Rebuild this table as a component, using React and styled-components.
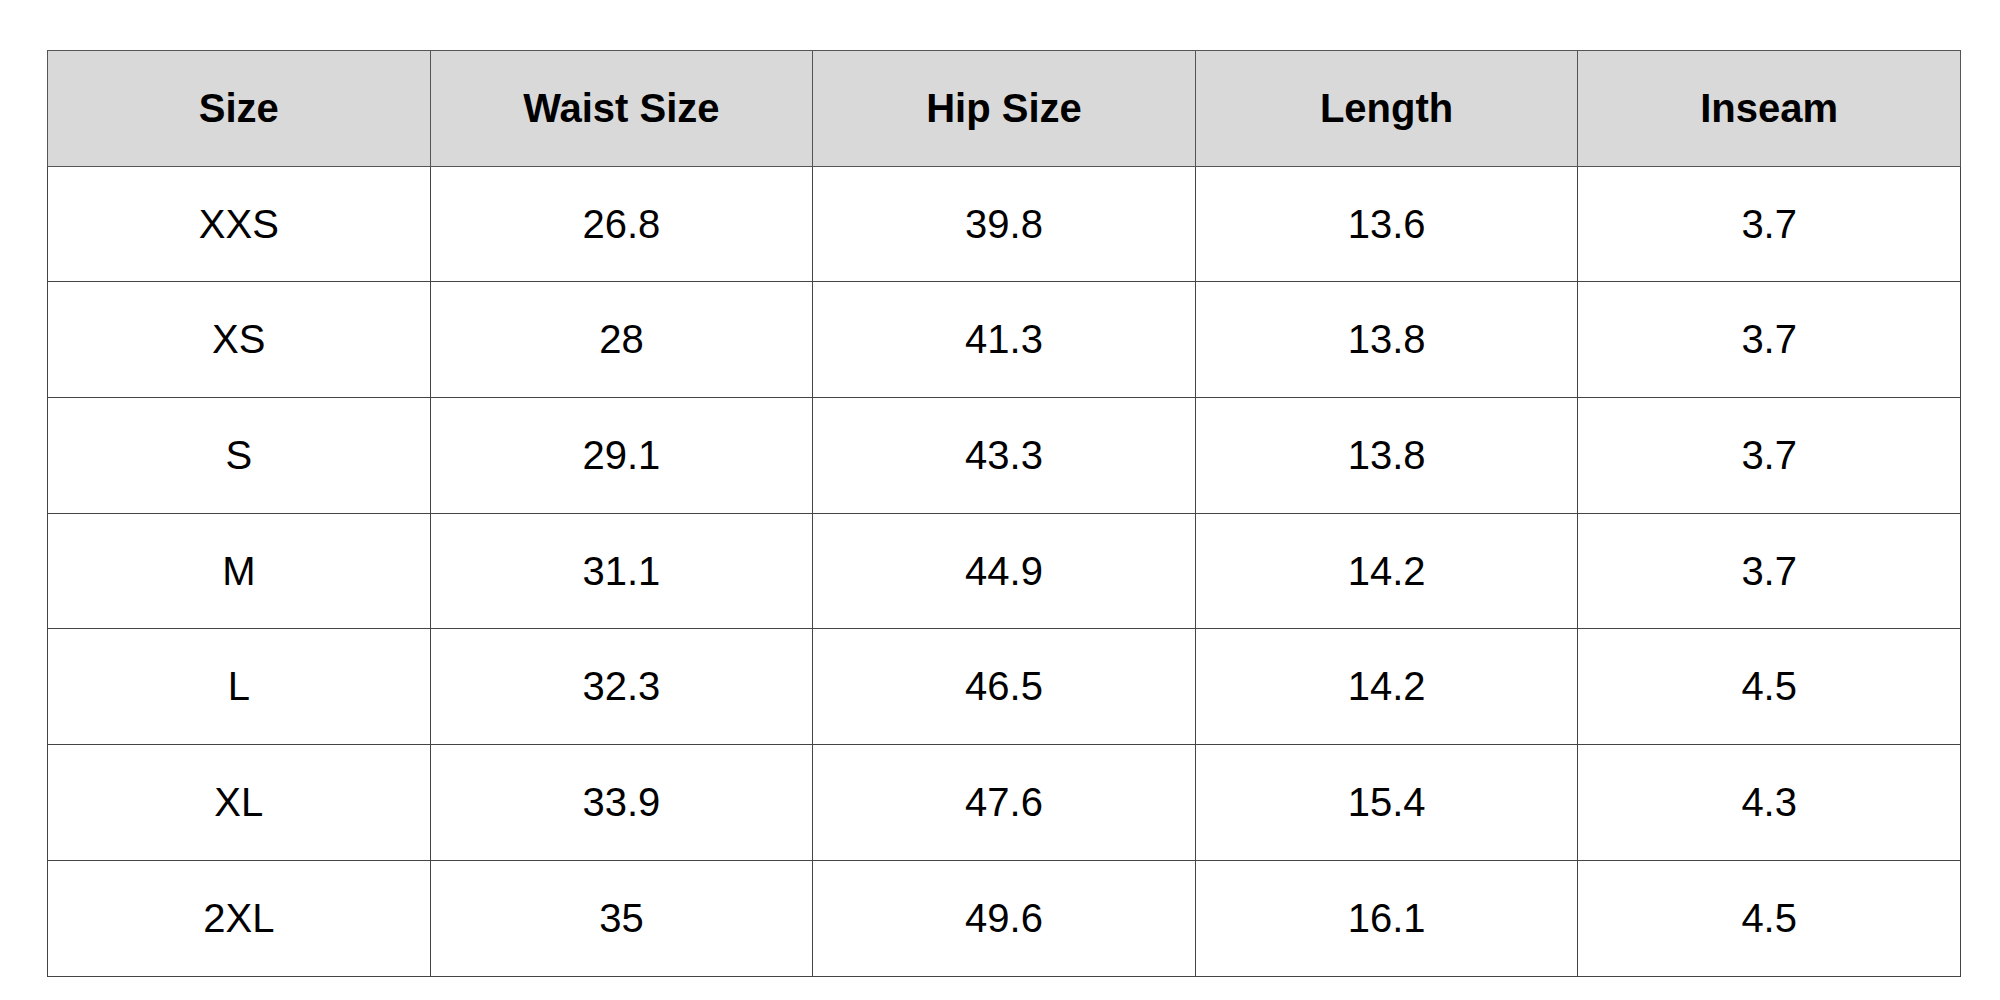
import React from "react";
import styled, { createGlobalStyle } from "styled-components";

const Global = createGlobalStyle`
  html, body { margin: 0; padding: 0; background: #fff; }
  body { font-family: "Liberation Sans", Arial, sans-serif; color: #000; }
`;

const Page = styled.div`
  padding: 50px 0 0 47px;
`;

const Table = styled.table`
  width: 1914px;
  border-collapse: collapse;
  table-layout: fixed;
  font-family: "Liberation Sans", Arial, sans-serif;
  font-size: 40px;
`;

const HeadCell = styled.th`
  height: 114.7px;
  padding: 0;
  background: #d9d9d9;
  border: 1px solid #555;
  font-weight: 700;
  text-align: center;
  vertical-align: middle;
`;

const Cell = styled.td`
  height: 114.7px;
  padding: 0;
  border: 1px solid #444;
  text-align: center;
  vertical-align: middle;
  font-weight: 400;
`;

const headers = ["Size", "Waist Size", "Hip Size", "Length", "Inseam"];
const rows = [
  ["XXS", "26.8", "39.8", "13.6", "3.7"],
  ["XS", "28", "41.3", "13.8", "3.7"],
  ["S", "29.1", "43.3", "13.8", "3.7"],
  ["M", "31.1", "44.9", "14.2", "3.7"],
  ["L", "32.3", "46.5", "14.2", "4.5"],
  ["XL", "33.9", "47.6", "15.4", "4.3"],
  ["2XL", "35", "49.6", "16.1", "4.5"],
];

export default function App() {
  return (
    <>
      <Global />
      <Page>
        <Table>
          <thead>
            <tr>
              {headers.map((h) => (
                <HeadCell key={h}>{h}</HeadCell>
              ))}
            </tr>
          </thead>
          <tbody>
            {rows.map((r) => (
              <tr key={r[0]}>
                {r.map((c, i) => (
                  <Cell key={i}>{c}</Cell>
                ))}
              </tr>
            ))}
          </tbody>
        </Table>
      </Page>
    </>
  );
}
